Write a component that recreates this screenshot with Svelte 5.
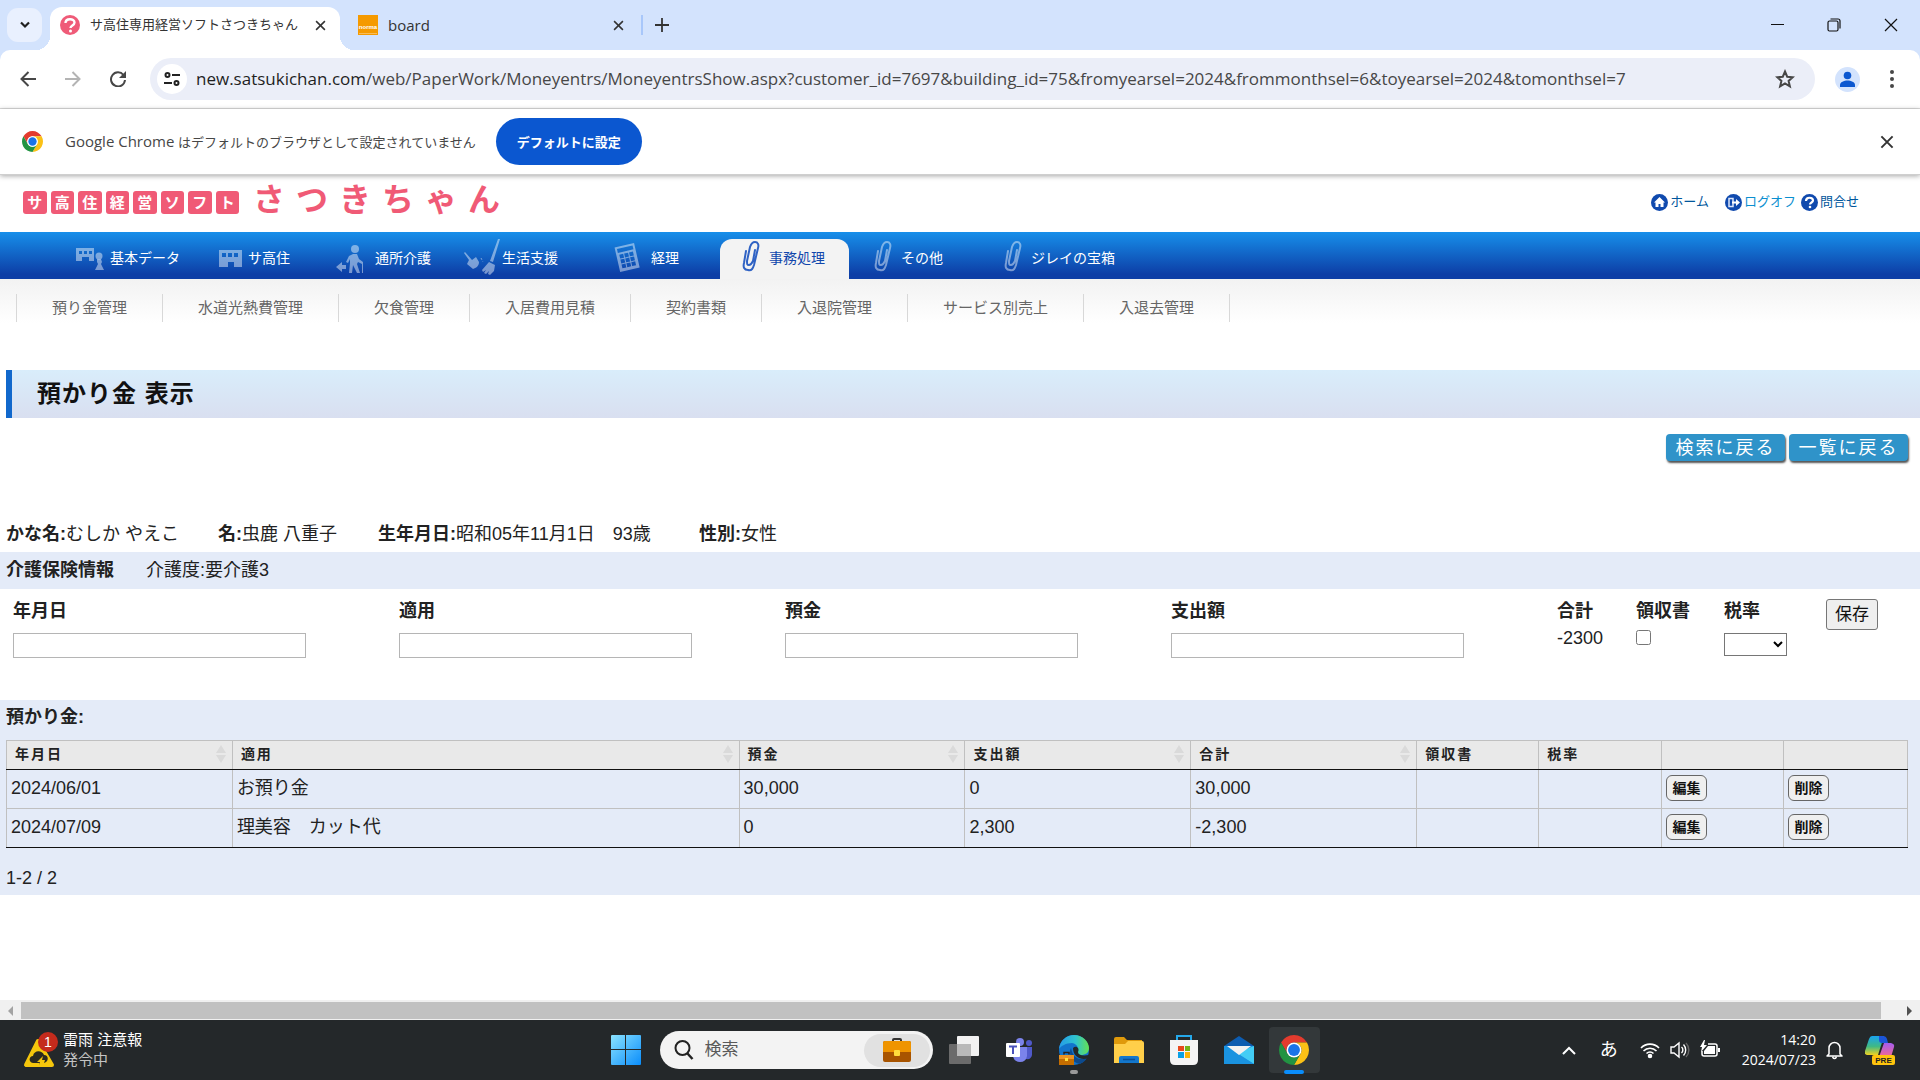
<script>
	const logoTiles = ['サ', '高', '住', '経', '営', 'ソ', 'フ', 'ト'];
	const logoLetters = ['さ', 'つ', 'き', 'ち', 'ゃ', 'ん'];

	const menus = [
		{ label: '基本データ', icon: 'data' },
		{ label: 'サ高住', icon: 'building' },
		{ label: '通所介護', icon: 'walker' },
		{ label: '生活支援', icon: 'broom' },
		{ label: '経理', icon: 'calculator' },
		{ label: '事務処理', icon: 'clip', active: true },
		{ label: 'その他', icon: 'clip' },
		{ label: 'ジレイの宝箱', icon: 'clip' }
	];

	const subMenus = [
		'預り金管理',
		'水道光熱費管理',
		'欠食管理',
		'入居費用見積',
		'契約書類',
		'入退院管理',
		'サービス別売上',
		'入退去管理'
	];

	const columns = [
		{ label: '年月日', width: 226, sortable: true },
		{ label: '適用', width: 507, sortable: true },
		{ label: '預金', width: 226, sortable: true },
		{ label: '支出額', width: 226, sortable: true },
		{ label: '合計', width: 226, sortable: true },
		{ label: '領収書', width: 122 },
		{ label: '税率', width: 123 },
		{ label: '', width: 122 },
		{ label: '', width: 124 }
	];
	const tableWidth = columns.reduce((sum, c) => sum + c.width, 0);

	const rows = [
		{ date: '2024/06/01', note: 'お預り金', deposit: '30,000', payment: '0', total: '30,000' },
		{ date: '2024/07/09', note: '理美容　カット代', deposit: '0', payment: '2,300', total: '-2,300' }
	];

	let date = '';
	let note = '';
	let deposit = '';
	let payment = '';
	let receipt = false;
	let taxRate = '';
</script>

{#snippet chromeLogo(size)}
	<svg width={size} height={size} viewBox="0 0 48 48" aria-hidden="true">
		<path fill="#e33b2e" d="M3.22 12A24 24 0 0 1 44.78 12H24A12 12 0 0 0 13.61 30Z" />
		<path fill="#fbc116" d="M44.78 12A24 24 0 0 1 24 48L34.39 30A12 12 0 0 0 24 12Z" />
		<path fill="#229342" d="M24 48A24 24 0 0 1 3.22 12L13.61 30A12 12 0 0 0 34.39 30Z" />
		<circle cx="24" cy="24" r="12" fill="#fff" />
		<circle cx="24" cy="24" r="9.5" fill="#1a73e8" />
	</svg>
{/snippet}

{#snippet cross(size)}
	<svg width={size} height={size} viewBox="0 0 10 10" fill="none" stroke="currentColor" stroke-width="1.4" aria-hidden="true">
		<path d="M1 1l8 8M9 1l-8 8" />
	</svg>
{/snippet}

{#snippet menuIcon(name)}
	<svg class="menu-icon" viewBox="0 0 49 40" aria-hidden="true">
		{#if name === 'data'}
			<path fill="currentColor" fill-rule="evenodd" d="M15 9h18v13h-5v-4h-7v4h-6zM18 12v3h3v-3zM23 12v3h3v-3zM28 12v3h3v-3z" />
			<circle cx="38" cy="17" r="3.5" fill="currentColor" />
			<path fill="currentColor" d="M36 20h4l1 3-1 2 3 6h-9l3-6-1-2z" />
		{:else if name === 'building'}
			<path fill="currentColor" fill-rule="evenodd" d="M20 11h23v17h-8v-5h-6v5h-9zM23 14v4h4v-4zM29 14v4h4v-4zM35 14v4h4v-4z" />
		{:else if name === 'walker'}
			<circle cx="29" cy="10" r="4" fill="currentColor" />
			<path fill="currentColor" d="M10 28l6-5v3h4v4h-4v3zM27 15h4l2 5 4 3v11h-1V25l-4-2-1 2 3 9h-3l-4-8-1 8h-3l1-10v-4l-2 4-2-1 3-6z" />
		{:else if name === 'broom'}
			<path fill="currentColor" d="M11 14l1-1 7 8 4-3 3 5c0 4-3 6-6 7l-6-5 2-4zM45 0h2l-7 23-3-1zM36 23l6 3-1 6-4 4-2-1 1-3-3 3-2-1 2-3-3 2-1-2z" />
			<path stroke="currentColor" stroke-dasharray="2 2" d="M28 19l2 4" />
		{:else if name === 'calculator'}
			<g transform="rotate(-13 25 18)">
				<path fill="currentColor" fill-rule="evenodd" d="M15 6h20v25H15zM17 8v4h16V8zM18 14v4h4v-4zM23 14v4h4v-4zM28 14v4h4v-4zM18 19v4h4v-4zM23 19v4h4v-4zM28 19v4h4v-4zM18 24v4h4v-4zM23 24v4h4v-4zM28 24v4h4v-4z" />
			</g>
		{:else}
			<path
				fill="none"
				stroke="currentColor"
				stroke-width="2"
				stroke-linecap="round"
				d="M26 12l-2 12c-1 4 0 7 4 7 4 1 5-2 6-5l4-17c1-3 0-6-3-6s-4 2-5 5l-3 14c0 3 0 4 2 4s3-2 4-4l2-11"
			/>
		{/if}
	</svg>
{/snippet}

<div class="screen">
	<!-- ブラウザ -->
	<div class="tabstrip">
		<button class="tab-search" aria-label="タブを検索">
			<svg width="12" height="8" viewBox="0 0 12 8" fill="none" stroke="#1f1f1f" stroke-width="2.2"><path d="M2 1.5l4 4 4-4" /></svg>
		</button>
		<div class="tab current">
			<svg width="20" height="20" viewBox="0 0 20 20" aria-hidden="true">
				<circle cx="10" cy="10" r="10" fill="#ef5b78" />
				<path d="M5.5 8c0-5 9-5 9-.5 0 3-4 3-4 5.5" fill="none" stroke="#fff" stroke-width="2.4" />
				<circle cx="10.5" cy="16" r="1.5" fill="#fff" />
			</svg>
			<span class="tab-title">サ高住専用経営ソフトさつきちゃん</span>
			<button class="plain" aria-label="タブを閉じる">{@render cross(11)}</button>
		</div>
		<div class="tab">
			<svg width="20" height="20" viewBox="0 0 20 20" aria-hidden="true">
				<rect width="20" height="20" fill="#f59a00" />
				<text x="10" y="14" font-size="6" font-weight="700" text-anchor="middle" fill="#fff">norma</text>
				<path d="M1 18.5h18" stroke="#f9bd58" />
			</svg>
			<span class="tab-title latin">board</span>
			<button class="plain" aria-label="タブを閉じる">{@render cross(11)}</button>
		</div>
		<button class="plain new-tab" aria-label="新しいタブ">
			<svg width="14" height="14" viewBox="0 0 14 14" stroke="#333" stroke-width="1.8"><path d="M7 0v14M0 7h14" /></svg>
		</button>
		<div class="window-controls">
			<button class="plain" aria-label="最小化"><svg width="14" height="14" viewBox="0 0 14 14"><path d="M1 6.5h13" stroke="#111" /></svg></button>
			<button class="plain" aria-label="元に戻す">
				<svg width="14" height="14" viewBox="0 0 14 14" fill="none" stroke="#111" stroke-width="1.2"><rect x="1" y="3" width="10" height="10" rx="1.5" /><path d="M3.5 1H11a2 2 0 0 1 2 2v7.5" /></svg>
			</button>
			<button class="plain" aria-label="閉じる">
				<svg width="14" height="14" viewBox="0 0 14 14" stroke="#111" stroke-width="1.2"><path d="M1 1l12 12M13 1L1 13" /></svg>
			</button>
		</div>
	</div>

	<div class="toolbar-back">
		<div class="toolbar">
			<button class="plain nav-button" aria-label="戻る">
				<svg width="16" height="16" viewBox="0 0 16 16" fill="none" stroke="#474747" stroke-width="2"><path d="M16 8H2M8.5 1L1.5 8l7 7" /></svg>
			</button>
			<button class="plain nav-button" aria-label="進む">
				<svg width="16" height="16" viewBox="0 0 16 16" fill="none" stroke="#b4b4b4" stroke-width="2"><path d="M0 8h14M7.5 1l7 7-7 7" /></svg>
			</button>
			<button class="plain nav-button" aria-label="再読み込み">
				<svg width="16" height="16" viewBox="0 0 16 16" fill="none" stroke="#474747" stroke-width="2"><path d="M13.5 4A7 7 0 1 0 15 9" /><path fill="#474747" stroke="none" d="M16 0v7H9z" /></svg>
			</button>
			<div class="omnibox">
				<span class="site-info">
					<svg width="16" height="14" viewBox="0 0 16 14" fill="none" stroke="#222" stroke-width="2"><circle cx="3.5" cy="3" r="2" /><path d="M8 3h8M0 11h8" /><circle cx="12.5" cy="11" r="2" /></svg>
				</span>
				<span class="url"><b>new.satsukichan.com</b>/web/PaperWork/Moneyentrs/MoneyentrsShow.aspx?customer_id=7697&amp;building_id=75&amp;fromyearsel=2024&amp;frommonthsel=6&amp;toyearsel=2024&amp;tomonthsel=7</span>
				<svg width="20" height="20" viewBox="0 0 20 20" fill="none" stroke="#474747" stroke-width="2"><path d="M10 2.5l2.2 5.2 5.6.5-4.2 3.7 1.3 5.5-4.9-2.9-4.9 2.9 1.3-5.5L2.2 8.2l5.6-.5z" /></svg>
			</div>
			<button class="plain avatar" aria-label="プロフィール">
				<svg width="25" height="25" viewBox="0 0 25 25"><circle cx="12.5" cy="12.5" r="12.5" fill="#d3e3fd" /><circle cx="12.5" cy="8.5" r="3.8" fill="#0b57d0" /><path fill="#0b57d0" d="M5 20v-2c0-3 4-4.5 7.5-4.5S20 15 20 18v2z" /></svg>
			</button>
			<button class="plain more" aria-label="メニュー">
				<svg width="4" height="18" viewBox="0 0 4 18" fill="#474747"><circle cx="2" cy="2" r="2" /><circle cx="2" cy="9" r="2" /><circle cx="2" cy="16" r="2" /></svg>
			</button>
		</div>
	</div>

	<div class="infobar">
		{@render chromeLogo(21)}
		<span class="infobar-text"><span class="latin">Google Chrome</span> はデフォルトのブラウザとして設定されていません</span>
		<button class="set-default">デフォルトに設定</button>
		<button class="plain infobar-close" aria-label="閉じる">{@render cross(14)}</button>
	</div>

	<!-- ページ -->
	<div class="page">
		<header class="site-header">
			<div class="logo">
				<span class="tiles">
					{#each logoTiles as tile}<span>{tile}</span>{/each}
				</span>
				<span class="letters">
					{#each logoLetters as letter}<span>{letter}</span>{/each}
				</span>
			</div>
			<nav class="tools">
				<a href="#home">
					<svg width="17" height="17" viewBox="0 0 17 17"><circle cx="8.5" cy="8.5" r="8.5" fill="#104aae" /><path fill="#fff" d="M8.5 3L3 8.5h1.5V13h3v-3h2v3h3V8.5H14z" /></svg>
					<span>ホーム</span>
				</a>
				<a href="#logoff" class="light">
					<svg width="17" height="17" viewBox="0 0 17 17"><circle cx="8.5" cy="8.5" r="8.5" fill="#104aae" /><path fill="none" stroke="#dbe6fb" stroke-width="1.5" d="M8 4.5H4v8h4z" /><path fill="#fff" d="M7 7.5h4V5l4 3.5-4 3.5V9.5H7z" /></svg>
					<span>ログオフ</span>
				</a>
				<a href="#contact">
					<svg width="17" height="17" viewBox="0 0 17 17"><circle cx="8.5" cy="8.5" r="8.5" fill="#104aae" /><path fill="none" stroke="#fff" stroke-width="2.2" d="M5 7c0-4.5 7-4 7-.5 0 2-3 2-3 4" /><circle cx="9" cy="13" r="1.3" fill="#fff" /></svg>
					<span>問合せ</span>
				</a>
			</nav>
		</header>

		<nav class="menu">
			{#each menus as menu}
				<a href="#menu" class:active={menu.active}>{@render menuIcon(menu.icon)}<span>{menu.label}</span></a>
			{/each}
		</nav>

		<nav class="submenu">
			<ul>
				{#each subMenus as item}
					<li><a href="#sub">{item}</a></li>
				{/each}
			</ul>
		</nav>

		<h1>預かり金 表示</h1>

		<div class="actions">
			<button>検索に戻る</button>
			<button>一覧に戻る</button>
		</div>

		<div class="person">
			<span><b>かな名:</b>むしか やえこ</span>
			<span><b>名:</b>虫鹿 八重子</span>
			<span><b>生年月日:</b>昭和05年11月1日　93歳</span>
			<span><b>性別:</b>女性</span>
		</div>
		<div class="insurance">
			<b>介護保険情報</b>
			<span>介護度:要介護3</span>
		</div>

		<form class="entry" on:submit|preventDefault>
			<div class="field">
				<label for="date">年月日</label>
				<input id="date" type="text" bind:value={date} />
			</div>
			<div class="field">
				<label for="note">適用</label>
				<input id="note" type="text" bind:value={note} />
			</div>
			<div class="field">
				<label for="deposit">預金</label>
				<input id="deposit" type="text" bind:value={deposit} />
			</div>
			<div class="field">
				<label for="payment">支出額</label>
				<input id="payment" type="text" bind:value={payment} />
			</div>
			<div class="field tight">
				<b>合計</b>
				<span>-2300</span>
			</div>
			<div class="field tight">
				<label for="receipt">領収書</label>
				<input id="receipt" type="checkbox" bind:checked={receipt} />
			</div>
			<div class="field">
				<label for="tax">税率</label>
				<select id="tax" bind:value={taxRate}>
					<option value=""></option>
					<option value="8">8%</option>
					<option value="10">10%</option>
				</select>
			</div>
			<div><button class="save">保存</button></div>
		</form>

		<section class="records">
			<h2>預かり金:</h2>
			<table>
				<colgroup>
					{#each columns as column}
						<col style="width: {(column.width / tableWidth) * 100}%" />
					{/each}
				</colgroup>
				<thead>
					<tr>
						{#each columns as column}
							<th>
								<div class="head">
									{column.label}
									{#if column.sortable}
										<svg width="10" height="18" viewBox="0 0 10 18" fill="#dadada"><path d="M5 0l5 8H0zM5 18l5-8H0z" /></svg>
									{/if}
								</div>
							</th>
						{/each}
					</tr>
				</thead>
				<tbody>
					{#each rows as row (row.date)}
						<tr>
							<td>{row.date}</td>
							<td>{row.note}</td>
							<td>{row.deposit}</td>
							<td>{row.payment}</td>
							<td>{row.total}</td>
							<td></td>
							<td></td>
							<td><button class="row-button">編集</button></td>
							<td><button class="row-button">削除</button></td>
						</tr>
					{/each}
				</tbody>
			</table>
			<p class="pager">1-2 / 2</p>
		</section>
	</div>

	<div class="scrollbar">
		<svg width="21" height="18" viewBox="0 0 21 18"><path fill="#a3a3a3" d="M13 4v10L8 9z" /></svg>
		<div class="thumb"></div>
		<svg width="39" height="18" viewBox="0 0 39 18"><path fill="#505050" d="M26 4v10l5-5z" /></svg>
	</div>

	<!-- タスクバー -->
	<footer class="taskbar">
		<div class="weather">
			<svg width="36" height="36" viewBox="0 0 36 36" aria-hidden="true">
				<path fill="#f5c60c" stroke="#f5c60c" stroke-width="4" stroke-linejoin="round" d="M15 9L3 33h26z" />
				<path fill="#2b2a20" d="M10 31c-5-1-4-7 0-7 1-6 9-6 11-1 5 0 5 7 0 8l1-3h-3l1-4-6 6h3l-1 3 1-2z" />
				<circle cx="25" cy="10" r="10" fill="#c42b1c" />
				<text x="25" y="15" font-size="14" text-anchor="middle" fill="#fff">1</text>
			</svg>
			<div>
				<div>雷雨 注意報</div>
				<div class="muted">発令中</div>
			</div>
		</div>

		<div class="apps">
			<button class="app" aria-label="スタート">
				<svg width="30" height="30" viewBox="0 0 30 30">
					<defs>
						<linearGradient id="win" x1="0" y1="0" x2="1" y2="1"><stop offset="0" stop-color="#8be3ff" /><stop offset="1" stop-color="#0a8dfb" /></linearGradient>
					</defs>
					<path fill="url(#win)" d="M0 1q0-1 1-1h13v14H0zM15 0h14q1 0 1 1v13H15zM0 15h14v15H1q-1 0-1-1zM15 15h15v14q0 1-1 1H15z" />
				</svg>
			</button>
			<div class="search">
				<svg width="20" height="20" viewBox="0 0 20 20" fill="none" stroke="#222" stroke-width="2"><circle cx="8.5" cy="8" r="7" /><path stroke-width="2.5" d="M13 13l5.5 6" /></svg>
				<input type="text" placeholder="検索" aria-label="検索" />
				<span class="highlight">
					<svg width="28" height="24" viewBox="0 0 28 24">
						<path d="M10 4V2q0-1 1-1h6q1 0 1 1v2" fill="none" stroke="#333" stroke-width="2" />
						<rect y="3" width="28" height="21" rx="2" fill="#a85400" />
						<path fill="#ef9400" d="M0 5q0-2 2-2h24q2 0 2 2v9H0z" />
						<rect x="11" y="12" width="6" height="6" rx="1" fill="#ffdd3c" />
					</svg>
				</span>
			</div>
			<button class="app" aria-label="タスクビュー">
				<svg width="30" height="30" viewBox="0 0 30 30"><rect x="8" y="1" width="22" height="20" rx="1" fill="#f2f2f2" /><rect y="9" width="22" height="20" rx="1" fill="#6b6b6b" /><path fill="#b9b9b9" d="M8 9h14v12H8z" /></svg>
			</button>
			<button class="app" aria-label="Teams">
				<svg width="30" height="30" viewBox="0 0 30 30">
					<circle cx="16" cy="7" r="4" fill="#7b83eb" /><circle cx="25" cy="8" r="3" fill="#5059c9" />
					<path fill="#5059c9" d="M21 12h7v8q-1 5-6 4z" /><path fill="#7b83eb" d="M9 12h14v9q-1 6-7 6t-7-6z" />
					<rect x="2" y="8" width="14" height="14" rx="1" fill="#fff" />
					<path stroke="#4b53bc" stroke-width="2" d="M5 11.5h8M9 11v8" />
				</svg>
			</button>
			<button class="app running" aria-label="Edge">
				<svg width="30" height="30" viewBox="0 0 30 30">
					<defs>
						<linearGradient id="edge" x1="0" y1="0" x2="1" y2="0"><stop offset="0" stop-color="#259be8" /><stop offset=".55" stop-color="#2fc3cf" /><stop offset="1" stop-color="#64e052" /></linearGradient>
					</defs>
					<circle cx="15" cy="15" r="15" fill="#1274cc" />
					<path fill="url(#edge)" d="M0 14C1 5 8 0 15 0c9 0 15 7 15 13 0 5-4 7-8 7-3 0-5-1-4-3 2-3 1-8-5-9C7 8 2 11 0 14z" />
					<path fill="#0c4a8e" d="M12 13c-3 6 1 15 9 16 4-2 6-4 7-6-8 3-14 0-16-10z" />
					<path fill="#23282a" d="M14 13c3-3 7 0 5 4 0 3 4 4 11 3v3c-8 3-16-1-16-10z" />
					<rect y="20" width="15" height="10" fill="#c46d00" /><path fill="#ea9323" d="M0 20h15v4H0z" /><path d="M5 19.5v-2h5v2" fill="none" stroke="#222" stroke-width="1.5" /><rect x="6" y="23" width="3" height="3" fill="#ffdd3c" />
				</svg>
			</button>
			<button class="app" aria-label="エクスプローラー">
				<svg width="30" height="30" viewBox="0 0 30 30"><path fill="#e09a0b" d="M0 4q0-2 2-2h8l3 3h15v10H0z" /><path fill="#ffcf4a" d="M0 9h11l3-3h14q2 0 2 2v20H0z" /><path fill="#1377cc" d="M5 28v-5q0-2 2-2h16q2 0 2 2v5z" /><path stroke="#0a4f96" stroke-width="1.5" d="M9 24.5h12" /></svg>
			</button>
			<button class="app" aria-label="Microsoft Store">
				<svg width="30" height="30" viewBox="0 0 30 30"><path d="M8 6V1h14v5" fill="none" stroke="#25a9ea" stroke-width="2" /><path fill="#f4f4f4" d="M1 5h28v20q0 5-5 5H6q-5 0-5-5z" /><path fill="#e8481d" d="M9 11h6v5H9z" /><path fill="#73b31a" d="M16 11h5v5h-5z" /><path fill="#0aa0e6" d="M9 17h6v6H9z" /><path fill="#f9b40a" d="M16 17h5v6h-5z" /></svg>
			</button>
			<button class="app" aria-label="メール">
				<svg width="30" height="30" viewBox="0 0 30 30"><path fill="#0c5cb0" d="M0 11L15 1l15 10z" /><path fill="#1a93e0" d="M0 11h30v18H0z" /><path fill="#43cdf5" d="M30 11v18L13 18z" /><path fill="#1a93e0" d="M0 29V11l30 18z" /><path fill="#f1f1f1" d="M3 11h24l-12 9z" /></svg>
			</button>
			<button class="app open" aria-label="Google Chrome">{@render chromeLogo(30)}</button>
		</div>

		<div class="tray">
			<svg width="14" height="9" viewBox="0 0 14 9" fill="none" stroke="#fff" stroke-width="2"><path d="M1 8l6-6 6 6" /></svg>
			<span class="ime">あ</span>
			<svg width="20" height="20" viewBox="0 0 20 20" fill="none" stroke="#fff" stroke-width="1.6"><path d="M1 8a12.5 12.5 0 0 1 18 0M3.5 11a9 9 0 0 1 13 0M6.5 13.5a5 5 0 0 1 7 0" /><circle cx="10" cy="16" r="1.5" fill="#fff" /></svg>
			<svg width="20" height="20" viewBox="0 0 20 20" fill="none" stroke="#fff" stroke-width="1.4"><path d="M1 7h3l5-4v14l-5-4H1z" /><path d="M11.5 7a4 4 0 0 1 0 6M13.5 4.5a8 8 0 0 1 0 11" /><path stroke="#666" d="M16 3a10 10 0 0 1 0 14" /></svg>
			<svg width="20" height="20" viewBox="0 0 20 20"><path fill="none" stroke="#fff" stroke-width="1.5" d="M8 4h7q2 0 2 2v8q0 2-2 2H4q-2 0-2-2v-3" /><path fill="#fff" d="M8 6h7v8H4v-3zM18 8h2v4h-2zM4 0L0 7h2L1 12l6-7H4l1-5z" /></svg>
			<div class="clock">
				<div>14:20</div>
				<div>2024/07/23</div>
			</div>
			<svg class="bell" width="17" height="20" viewBox="0 0 17 20" fill="none" stroke="#fff" stroke-width="1.5"><path d="M3 14V8a5.5 5.5 0 0 1 11 0v6l2 2H1zM6.5 17q2 3 4 0" stroke-linejoin="round" /></svg>
			<svg width="30" height="29" viewBox="0 0 30 29">
				<defs>
					<linearGradient id="copilotLeft" x1="0" y1="0" x2="0" y2="1"><stop offset="0" stop-color="#1aa4f0" /><stop offset=".55" stop-color="#3fb984" /><stop offset="1" stop-color="#f0d222" /></linearGradient>
					<linearGradient id="copilotRight" x1="0" y1="0" x2="0" y2="1"><stop offset="0" stop-color="#a45cf0" /><stop offset="1" stop-color="#f56a8f" /></linearGradient>
				</defs>
				<path fill="url(#copilotLeft)" d="M7 0h12l-6 19H2q-3-1-2-4L4 3q1-3 3-3z" />
				<path fill="#1b55d8" d="M14 0h4q3 0 4 3l1 4h-6q-3 0-3-3z" />
				<path fill="url(#copilotRight)" d="M19 7h7q4 1 3 4l-3 10H14z" />
				<rect x="7" y="19" width="23" height="10" rx="2" fill="#ffc40d" />
				<text x="18.5" y="27" font-size="8" font-weight="700" text-anchor="middle" fill="#222">PRE</text>
			</svg>
		</div>
	</footer>
</div>

<style>
	:global(body) {
		background: #fff;
	}

	.screen {
		min-height: 100vh;
		display: flex;
		flex-direction: column;
		box-sizing: border-box;
		font-family: 'Liberation Sans', 'Noto Sans CJK JP', sans-serif;
		font-size: 18px;
		line-height: 24px;
		color: #222;
	}

	.screen :global(*) {
		box-sizing: border-box;
	}

	svg {
		display: block;
		flex: none;
	}

	button,
	input,
	select {
		font-family: inherit;
	}

	a {
		color: inherit;
		text-decoration: none;
	}

	.latin {
		font-family: 'Open Sans', sans-serif;
		font-size: 15px;
	}

	.plain {
		display: flex;
		align-items: center;
		justify-content: center;
		padding: 0;
		border: none;
		background: none;
		color: #333;
	}

	/* tab strip */
	.tabstrip {
		display: flex;
		align-items: center;
		height: 50px;
		padding-left: 7px;
		background: #d3e3fd;
	}

	.tab-search {
		display: flex;
		align-items: center;
		justify-content: center;
		width: 35px;
		height: 34px;
		padding: 0;
		border: none;
		border-radius: 11px;
		background: #e9f0fe;
	}

	.tab {
		display: flex;
		align-items: center;
		gap: 10px;
		width: 290px;
		padding: 0 14px 0 10px;
		margin-left: 8px;
	}

	.tab-title {
		flex: 1;
		font-size: 13px;
		color: #333;
		white-space: nowrap;
	}

	.tab-title.latin {
		font-size: 15px;
	}

	.tab.current {
		position: relative;
		align-self: flex-end;
		height: 43px;
		padding-bottom: 7px;
		border-radius: 12px 12px 0 0;
		background: #fff;
	}

	.tab.current::before,
	.tab.current::after {
		content: '';
		position: absolute;
		bottom: 0;
		width: 14px;
		height: 14px;
	}

	.tab.current::before {
		left: -14px;
		background: radial-gradient(circle at 0 0, transparent 14px, #fff 14px);
	}

	.tab.current::after {
		right: -14px;
		background: radial-gradient(circle at 100% 0, transparent 14px, #fff 14px);
	}

	.new-tab {
		width: 40px;
		height: 20px;
		margin-left: 3px;
		border-left: 2px solid #a8c7fa;
	}

	.window-controls {
		display: flex;
		gap: 43px;
		margin-left: auto;
		padding-right: 22px;
	}

	/* toolbar */
	.toolbar-back {
		background: #d3e3fd;
	}

	.toolbar {
		display: flex;
		align-items: center;
		height: 59px;
		padding-left: 5px;
		border-bottom: 1px solid #dcdcdc;
		border-radius: 10px 10px 0 0;
		background: #fff;
	}

	.nav-button {
		width: 45px;
		height: 40px;
	}

	.omnibox {
		display: flex;
		flex: 1;
		align-items: center;
		gap: 9px;
		min-width: 0;
		height: 42px;
		margin-left: 10px;
		padding: 0 20px 0 7px;
		border-radius: 21px;
		background: #ebeef8;
	}

	.site-info {
		display: flex;
		align-items: center;
		justify-content: center;
		width: 30px;
		height: 30px;
		border-radius: 50%;
		background: #fff;
	}

	.url {
		flex: 1;
		overflow: hidden;
		font-family: 'Open Sans', sans-serif;
		font-size: 17px;
		color: #474747;
		white-space: nowrap;
	}

	.url b {
		font-weight: 400;
		color: #1f1f1f;
	}

	.avatar {
		margin-left: 20px;
	}

	.more {
		width: 60px;
		padding-left: 4px;
	}

	.infobar {
		position: relative;
		display: flex;
		align-items: center;
		height: 66px;
		padding: 0 26px 0 22px;
		border-bottom: 1px solid #cfcfcf;
		background: #fff;
		box-shadow: 0 1px 5px rgba(0, 0, 0, 0.35);
	}

	.infobar-text {
		margin-left: 22px;
		font-size: 13px;
		color: #474747;
	}

	.set-default {
		width: 146px;
		height: 47px;
		margin-left: 20px;
		padding: 0;
		border: none;
		border-radius: 24px;
		background: #0b57d0;
		font-size: 13px;
		font-weight: 700;
		color: #fff;
	}

	.infobar-close {
		margin-left: auto;
	}

	/* page */
	.page {
		flex: 1;
	}

	.site-header {
		display: flex;
		align-items: center;
		justify-content: space-between;
		height: 57px;
		padding: 0 61px 3px 23px;
	}

	.logo {
		display: flex;
		align-items: center;
		gap: 14px;
		color: #f05a76;
		font-weight: 700;
	}

	.tiles {
		display: grid;
		grid-template-columns: repeat(8, 1fr);
		gap: 4px;
		width: 216px;
	}

	.tiles span {
		border-radius: 3px;
		background: #f05a76;
		font-size: 15px;
		line-height: 23px;
		text-align: center;
		color: #fff;
	}

	.letters {
		display: grid;
		grid-template-columns: repeat(6, 43px);
		padding-bottom: 4px;
		font-size: 32px;
		line-height: 36px;
	}

	.tools {
		display: flex;
		gap: 16px;
		font-size: 13px;
		color: #00569c;
	}

	.tools a {
		display: flex;
		align-items: center;
		gap: 2px;
	}

	.tools .light {
		margin-right: -11px;
		color: #0a8fd0;
	}

	.menu {
		display: grid;
		grid-template-columns: 135px 124px 124px 146px 115px 129px 127px auto;
		gap: 3px;
		height: 47px;
		padding: 7px 0 0 61px;
		background: linear-gradient(#178fea, #0d3ea6 90%);
		font-size: 14px;
		color: #fff;
	}

	.menu a {
		display: flex;
		align-items: center;
		height: 40px;
		white-space: nowrap;
	}

	.menu span {
		padding-bottom: 2px;
	}

	.menu-icon {
		width: 49px;
		height: 40px;
		color: rgba(255, 255, 255, 0.45);
	}

	.menu .active {
		border-radius: 12px 12px 0 0;
		background: #f3f3f3;
		color: #1147ac;
	}

	.menu .active .menu-icon {
		color: #2f62c4;
	}

	.submenu {
		padding: 15px 16px 8px;
		background: linear-gradient(#f2f2f2, #fff 44px);
	}

	.submenu ul {
		display: flex;
		margin: 0;
		padding: 0;
		list-style: none;
	}

	.submenu li {
		padding: 0 35px;
		border-left: 1px solid #d8d8d8;
		font-size: 15px;
		line-height: 28px;
		color: #666;
	}

	.submenu li:last-child {
		border-right: 1px solid #d8d8d8;
	}

	h1 {
		margin: 40px 0 0 6px;
		padding-left: 25px;
		border-left: 6px solid #1168cc;
		background: linear-gradient(#d9edfb, #d9dff0);
		font-size: 24px;
		font-weight: 700;
		line-height: 48px;
		letter-spacing: 1px;
		color: #111;
	}

	.actions {
		display: flex;
		justify-content: flex-end;
		gap: 4px;
		margin-top: 16px;
		padding-right: 12px;
	}

	.actions button {
		width: 119px;
		height: 27px;
		padding: 0;
		border: none;
		border-radius: 4px;
		background: #2f93c9;
		box-shadow: 1px 2px 2px #555;
		font-size: 18px;
		line-height: 26px;
		letter-spacing: 2px;
		color: #fff;
	}

	.person {
		display: grid;
		grid-template-columns: 212px 160px 321px auto;
		margin-top: 54px;
		padding: 7px 6px 6px;
	}

	.insurance {
		display: flex;
		gap: 32px;
		padding: 6px 6px 7px;
		background: #e4ebf8;
	}

	.entry {
		display: grid;
		grid-template-columns: repeat(4, 386fr) 79fr 88fr 102fr 94fr;
		padding: 10px 0 42px 13px;
	}

	.field {
		display: flex;
		flex-direction: column;
		align-items: flex-start;
		gap: 10px;
	}

	.field.tight {
		gap: 3px;
	}

	.field label {
		font-weight: 700;
		white-space: nowrap;
	}

	.field input[type='text'] {
		width: 76%;
		height: 25px;
		border: 1px solid #b5b5b5;
		background: #fff;
		font-size: 17px;
	}

	.field input[type='checkbox'] {
		width: 15px;
		height: 15px;
		margin: 4px 0 0;
	}

	.field select {
		width: 63px;
		height: 23px;
		border: 1px solid #767676;
		background: #fff;
	}

	.save {
		width: 52px;
		height: 31px;
		padding: 0 0 4px;
		border: 1px solid #767676;
		border-radius: 3px;
		background: #efefef;
		font-size: 17px;
		color: #111;
	}

	.records {
		padding: 0 12px 5px 6px;
		background: #e4ebf8;
	}

	h2 {
		margin: 0 0 6px;
		font-size: 18px;
		line-height: 34px;
	}

	table {
		width: 100%;
		table-layout: fixed;
		border-collapse: collapse;
	}

	th,
	td {
		padding: 0 4px;
		border: 1px solid #c0c0c0;
		text-align: left;
	}

	th {
		height: 29px;
		padding: 0 6px 2px 8px;
		border-bottom: 1px solid #111;
		background: #e9e9e9;
		font-size: 14px;
		line-height: 20px;
		letter-spacing: 2px;
	}

	.head {
		display: flex;
		align-items: center;
		justify-content: space-between;
	}

	td {
		height: 39px;
		padding-bottom: 2px;
	}

	tbody tr:last-child td {
		border-bottom: 1px solid #111;
	}

	.row-button {
		display: block;
		width: 41px;
		height: 26px;
		padding: 0 0 2px;
		border: 1px solid #666;
		border-radius: 6px;
		background: #efefef;
		font-size: 14px;
		font-weight: 700;
		color: #111;
	}

	.pager {
		margin: 18px 0 0;
	}

	/* horizontal scrollbar */
	.scrollbar {
		display: flex;
		height: 20px;
		padding: 2px 0 1px;
		background: #f0f0f0;
	}

	.thumb {
		flex: 1;
		background: #c1c1c1;
	}

	/* taskbar */
	.taskbar {
		display: grid;
		grid-template-columns: 1fr auto 1fr;
		align-items: center;
		height: 60px;
		background: #24282a;
		color: #fff;
	}

	.weather {
		display: flex;
		align-items: center;
		gap: 4px;
		padding-left: 23px;
		font-size: 15px;
		line-height: 20px;
	}

	.muted {
		color: #c4c4c4;
	}

	.apps {
		display: flex;
		align-items: center;
	}

	.app {
		position: relative;
		display: flex;
		align-items: center;
		justify-content: center;
		width: 55px;
		height: 50px;
		padding: 0;
		border: 2px solid transparent;
		border-radius: 6px;
		background: none;
		background-clip: padding-box;
	}

	.app.open {
		background-color: #33383a;
	}

	.app.running::after,
	.app.open::after {
		content: '';
		position: absolute;
		bottom: -1px;
		width: 8px;
		height: 4px;
		border-radius: 2px;
		background: #9a9a9a;
	}

	.app.open::after {
		width: 20px;
		background: #0a8dfb;
	}

	.search {
		display: flex;
		align-items: center;
		width: 273px;
		height: 38px;
		margin: 0 4px 0 6px;
		padding: 0 3px 0 14px;
		border-radius: 19px;
		background: #f3f3f3;
	}

	.search input {
		flex: 1;
		min-width: 0;
		padding: 0 0 0 11px;
		border: none;
		background: none;
		font-size: 17px;
	}

	.search input::placeholder {
		color: #5a5a5a;
	}

	.highlight {
		display: flex;
		align-items: center;
		justify-content: center;
		width: 66px;
		height: 33px;
		border-radius: 17px;
		background: #e1e1e1;
	}

	.tray {
		display: flex;
		align-items: center;
		justify-content: flex-end;
		gap: 10px;
		padding-right: 25px;
	}

	.ime {
		margin: 0 12px 0 14px;
		font-size: 18px;
	}

	.clock {
		margin-left: 12px;
		font-family: 'Open Sans', sans-serif;
		font-size: 14px;
		line-height: 20px;
		text-align: right;
	}

	.bell {
		margin-right: 12px;
	}
</style>
